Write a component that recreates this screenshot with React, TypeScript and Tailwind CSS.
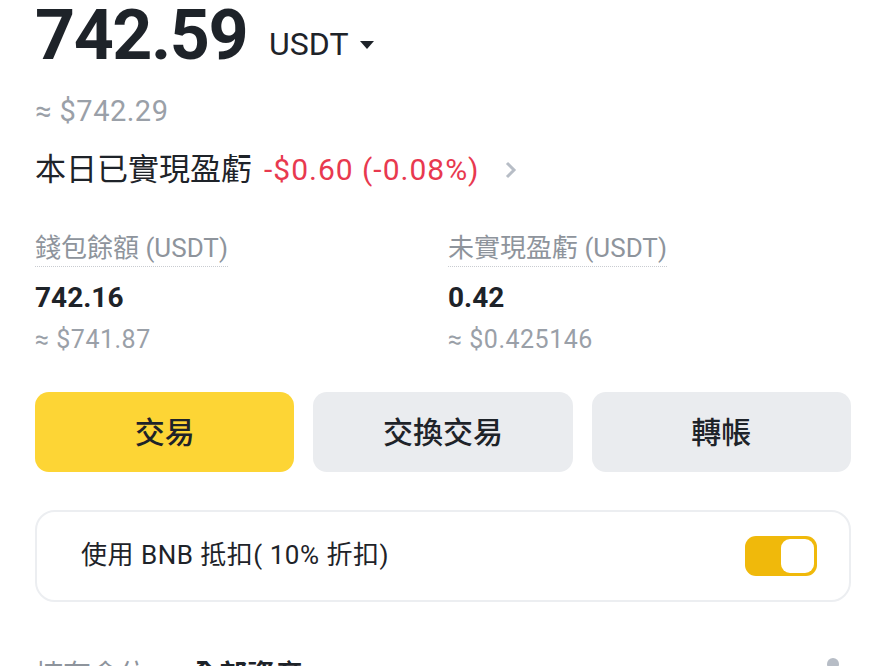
const latin = "font-['Roboto','Noto_Sans_CJK_TC',sans-serif]";

function Stat({ label, value, usd }: { label: string; value: string; usd: string }) {
  return (
    <div className="flex flex-col items-start">
      <div className="text-[26px] leading-[32px] text-[#8e949c] border-b border-dotted border-[#c9ccd1] pb-[2px]">
        {label}
      </div>
      <div className="mt-[14px] text-[28px] leading-[34px] font-bold text-[#1e2329]">{value}</div>
      <div className="mt-[10px] text-[25px] leading-[30px] tracking-[0.5px] text-[#9aa0a8]">{usd}</div>
    </div>
  );
}

export default function App() {
  return (
    <div className={`${latin} w-[886px] h-[666px] overflow-hidden bg-white text-[#1e2329]`}>
      <div className="px-[35px] pt-[2px]">
        <div className="flex items-end h-[66px]">
          <span className="text-[70px] leading-[66px] font-bold tracking-[-1.5px] text-[#1e2329]">742.59</span>
          <span className="ml-[22px] mb-[6px] text-[32px] leading-[36px] font-normal text-[#1e2329]">USDT</span>
          <svg className="ml-[10px] mb-[18px]" width="16" height="10" viewBox="0 0 16 10">
            <path d="M1 1h14L8 9z" fill="#1e2329" />
          </svg>
        </div>

        <div className="mt-[26px] text-[29px] leading-[34px] tracking-[0.5px] text-[#9aa0a8]">≈ $742.29</div>

        <div className="mt-[22px] flex items-center text-[31px] leading-[40px]">
          <span className="text-[#1e2329]">本日已實現盈虧</span>
          <span className="ml-[12px] text-[30px] tracking-[1px] text-[#e8394f]">-$0.60 (-0.08%)</span>
          <svg className="ml-[24px]" width="14" height="20" viewBox="0 0 14 20">
            <path d="M3 3l7 7-7 7" fill="none" stroke="#b7bdc6" strokeWidth="3" />
          </svg>
        </div>

        <div className="mt-[42px] grid grid-cols-[413px_1fr]">
          <Stat label="錢包餘額 (USDT)" value="742.16" usd="≈ $741.87" />
          <Stat label="未實現盈虧 (USDT)" value="0.42" usd="≈ $0.425146" />
        </div>

        <div className="mt-[37px] grid grid-cols-3 gap-[19px]">
          <button className="h-[80px] rounded-[14px] bg-[#fdd535] text-[30px] font-medium text-[#1e2329]">交易</button>
          <button className="h-[80px] rounded-[14px] bg-[#eaecef] text-[30px] font-medium text-[#1e2329]">交換交易</button>
          <button className="h-[80px] rounded-[14px] bg-[#eaecef] text-[30px] font-medium text-[#1e2329]">轉帳</button>
        </div>

        <div className="mt-[38px] h-[92px] rounded-[20px] border-2 border-[#eceef1] flex items-center justify-between pl-[44px] pr-[32px]">
          <span className="text-[26px] leading-[32px] tracking-[0.5px] text-[#1e2329] -mt-[2px]">使用 BNB 抵扣( 10% 折扣)</span>
          <div className="w-[72px] h-[40px] rounded-[11px] bg-[#f0b90b] flex items-center justify-end pr-[3px]">
            <div className="w-[33px] h-[34px] rounded-[9px] bg-white" />
          </div>
        </div>

        <div className="mt-[56px] flex items-start justify-between">
          <div className="flex items-center text-[28px] leading-[36px]">
            <span className="text-[#8e949c]">持有倉位</span>
            <span className="ml-[44px] font-bold text-[#1e2329]">全部資產</span>
          </div>
          <svg width="28" height="28" viewBox="0 0 28 28" className="mr-[4px] -mt-[4px]">
            <circle cx="14" cy="10" r="6" fill="#b7bdc6" />
            <rect x="4" y="18" width="20" height="8" rx="3" fill="#b7bdc6" />
          </svg>
        </div>
      </div>
    </div>
  );
}
